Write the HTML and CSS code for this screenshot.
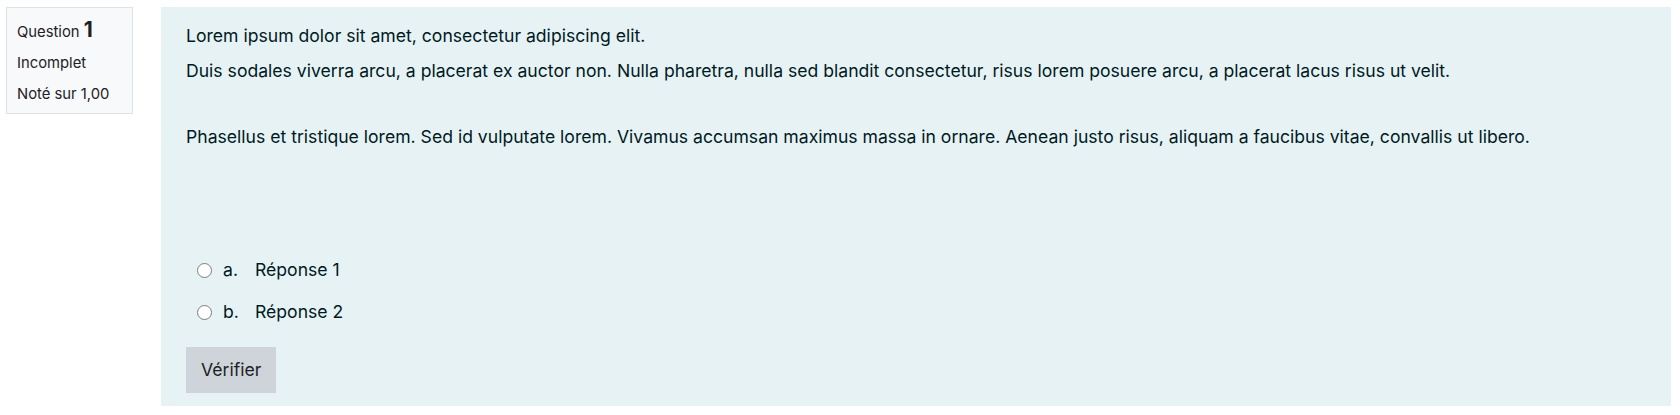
FILE: index.html
```html
<!DOCTYPE html>
<html>
<head lang="fr">
    <meta charset="UTF-8">
    <title>Question 1</title>
    <link rel="stylesheet" href="styles.css">
</head>
<body>

<div class="que">
    <div class="info">
        <div class="qtitle">Question <span class="qno">1</span></div>
        <div class="state">Incomplet</div>
        <div class="grade">Noté sur 1,00</div>
    </div>

    <div class="formulation">
        <p class="first">Lorem ipsum dolor sit amet, consectetur adipiscing elit.</p>
        <p class="second">Duis sodales viverra arcu, a placerat ex auctor non. Nulla pharetra, nulla sed blandit consectetur, risus lorem posuere arcu, a placerat lacus risus ut velit.</p>
        <p class="third">Phasellus et tristique lorem. Sed id vulputate lorem. Vivamus accumsan maximus massa in ornare. Aenean justo risus, aliquam a faucibus vitae, convallis ut libero.</p>

        <div class="answer">
            <label class="r0">
                <span class="radio"></span>
                <span class="letter">a.</span>
                <span>Réponse 1</span>
            </label>
            <label class="r1">
                <span class="radio"></span>
                <span class="letter">b.</span>
                <span>Réponse 2</span>
            </label>
        </div>

        <button class="submit">Vérifier</button>
    </div>
</div>

</body>
</html>
```

FILE: styles.css
```css
* {
    margin: 0;
    padding: 0;
    box-sizing: border-box;
}

body {
    font-family: Inter, "Noto Sans", sans-serif;
    color: #1d2125;
    background: #ffffff;
}

.que {
    display: flex;
    align-items: flex-start;
    gap: 28px;
    padding: 7px 9px 0 6px;
}

.info {
    flex: none;
    width: 127px;
    height: 107px;
    background: #f8f9fa;
    border: 1px solid #dee2e6;
    padding: 11px 0 0 10px;
    font-size: 14.8px;
}

.info div {
    line-height: 21px;
    margin-bottom: 10px;
}

.qno {
    font-size: 21px;
    font-weight: 700;
    line-height: 1;
}

.formulation {
    flex: 1;
    background: #e7f2f5;
    color: #001a1e;
    padding: 16px 25px 13px 25px;
    font-size: 17.6px;
}

.formulation p {
    line-height: 26px;
}

.first {
    margin-bottom: 9px;
}

.second {
    margin-bottom: 40px;
}

.answer {
    margin-top: 107px;
    display: flex;
    flex-direction: column;
    gap: 16px;
}

.answer label {
    display: flex;
    align-items: center;
    line-height: 26px;
    padding-left: 11px;
}

.radio {
    width: 15px;
    height: 15px;
    border: 1px solid #7a7e82;
    border-radius: 50%;
    background: #ffffff;
    margin-right: 11px;
}

.letter {
    width: 32px;
}

.submit {
    margin-top: 22px;
    font-family: inherit;
    font-size: 17.6px;
    line-height: 26px;
    padding: 10px 15px;
    background: #ced4da;
    color: #1d2125;
    border: none;
    border-radius: 0;
}
```
